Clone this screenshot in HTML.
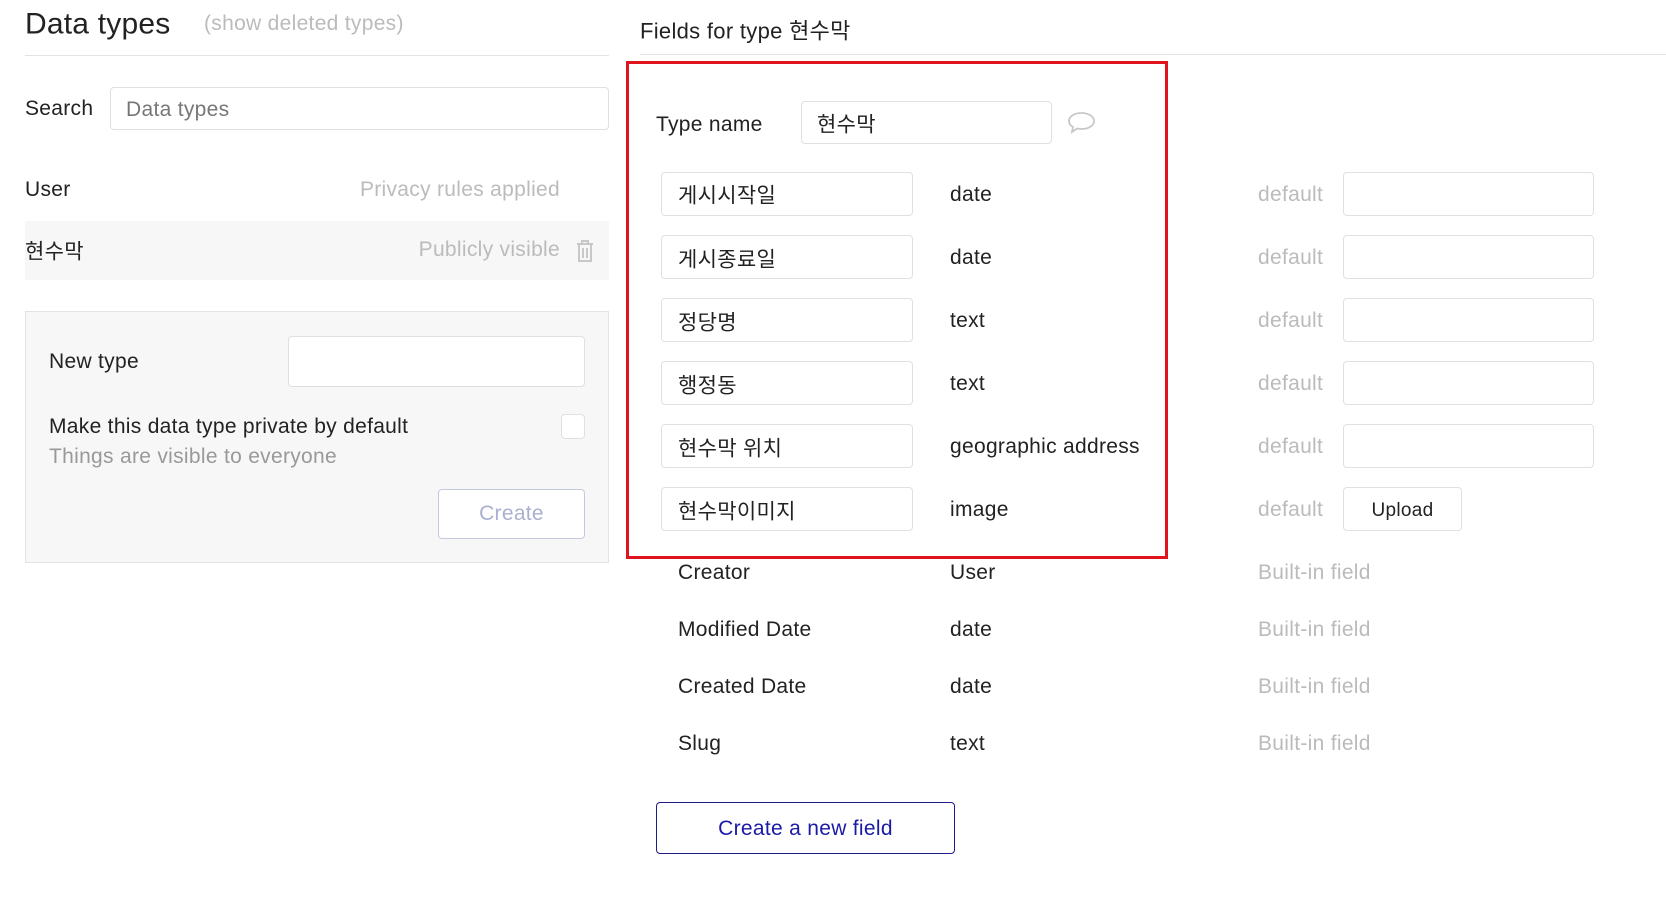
<!DOCTYPE html>
<html><head><meta charset="utf-8"><style>
*{box-sizing:border-box;margin:0;padding:0}
body{width:1666px;height:898px;background:#fff;position:relative;overflow:hidden;font-family:"Liberation Sans","Noto Sans CJK KR",sans-serif;color:#222;font-size:21px;letter-spacing:0.3px}
.a{position:absolute;white-space:nowrap}
.c{transform:translateY(-45%)}
.g{color:#bbb}
.inp{position:absolute;border:1px solid #e0e0e0;border-radius:4px;background:#fff}
</style></head><body>
<div class="a c" style="left:25px;top:23px;font-size:30px;color:#222;letter-spacing:0.2px">Data types</div>
<div class="a c g" style="left:204px;top:23px;font-size:21px">(show deleted types)</div>
<div class="a" style="left:25px;top:55px;width:584px;height:1px;background:#e3e3e3"></div>
<div class="a c" style="left:640px;top:28px;font-size:22px">Fields for type 현수막</div>
<div class="a" style="left:640px;top:54px;width:1026px;height:1px;background:#e3e3e3"></div>

<div class="a c" style="left:25px;top:108px">Search</div>
<div class="inp" style="left:110px;top:87px;width:499px;height:43px"></div>
<div class="a c" style="left:126px;top:109px;color:#777">Data types</div>

<div class="a c" style="left:25px;top:189px">User</div>
<div class="a c g" style="right:1106px;top:189px">Privacy rules applied</div>
<div class="a" style="left:25px;top:221px;width:584px;height:59px;background:#f7f7f7"></div>
<div class="a c" style="left:25px;top:249px">현수막</div>
<div class="a c g" style="right:1106px;top:249px">Publicly visible</div>
<svg class="a" style="left:576px;top:240px" width="18" height="23" viewBox="0 0 18 23" fill="none" stroke="#c8c8c8" stroke-width="2"><path d="M1 4h16M6 4V1h6v3M3 5v16h12V5M7 8v10M11 8v10"/></svg>

<div class="a" style="left:25px;top:311px;width:584px;height:252px;background:#f7f7f7;border:1px solid #e3e3e3"></div>
<div class="a c" style="left:49px;top:361px">New type</div>
<div class="inp" style="left:288px;top:336px;width:297px;height:51px"></div>
<div class="a c" style="left:49px;top:426px">Make this data type private by default</div>
<div class="inp" style="left:561px;top:414px;width:24px;height:25px"></div>
<div class="a c" style="left:49px;top:456px;color:#999">Things are visible to everyone</div>
<div class="a" style="left:438px;top:489px;width:147px;height:50px;border:1px solid #c5c9de;border-radius:4px;background:#fff;color:#aab0d0;text-align:center;line-height:48px">Create</div>

<div class="a" style="left:626px;top:61px;width:542px;height:498px;border:3px solid #e0141e"></div>
<div class="a c" style="left:656px;top:124px">Type name</div>
<div class="inp" style="left:801px;top:101px;width:251px;height:43px"></div>
<div class="a c" style="left:817px;top:122px">현수막</div>
<svg class="a" style="left:1067px;top:111px" width="29" height="24" viewBox="0 0 29 24" fill="none" stroke="#c8c8c8" stroke-width="1.8"><path d="M14.5 2C21 2 27 5 27 10s-6 8-12.5 8c-1.5 0-3-.2-4.3-.5L5 21l1-5C3 14.5 2 12.5 2 10 2 5 8 2 14.5 2z"/></svg>

<div class="inp" style="left:661px;top:172px;width:252px;height:44px"></div><div class="a c" style="left:678px;top:193px">게시시작일</div><div class="a c" style="left:950px;top:194px">date</div><div class="a c g" style="left:1258px;top:194px">default</div><div class="inp" style="left:1343px;top:172px;width:251px;height:44px"></div>
<div class="inp" style="left:661px;top:235px;width:252px;height:44px"></div><div class="a c" style="left:678px;top:257px">게시종료일</div><div class="a c" style="left:950px;top:257px">date</div><div class="a c g" style="left:1258px;top:257px">default</div><div class="inp" style="left:1343px;top:235px;width:251px;height:44px"></div>
<div class="inp" style="left:661px;top:298px;width:252px;height:44px"></div><div class="a c" style="left:678px;top:320px">정당명</div><div class="a c" style="left:950px;top:320px">text</div><div class="a c g" style="left:1258px;top:320px">default</div><div class="inp" style="left:1343px;top:298px;width:251px;height:44px"></div>
<div class="inp" style="left:661px;top:361px;width:252px;height:44px"></div><div class="a c" style="left:678px;top:383px">행정동</div><div class="a c" style="left:950px;top:383px">text</div><div class="a c g" style="left:1258px;top:383px">default</div><div class="inp" style="left:1343px;top:361px;width:251px;height:44px"></div>
<div class="inp" style="left:661px;top:424px;width:252px;height:44px"></div><div class="a c" style="left:678px;top:446px">현수막 위치</div><div class="a c" style="left:950px;top:446px">geographic address</div><div class="a c g" style="left:1258px;top:446px">default</div><div class="inp" style="left:1343px;top:424px;width:251px;height:44px"></div>
<div class="inp" style="left:661px;top:487px;width:252px;height:44px"></div><div class="a c" style="left:678px;top:509px">현수막이미지</div><div class="a c" style="left:950px;top:509px">image</div><div class="a c g" style="left:1258px;top:509px">default</div><div class="inp" style="left:1343px;top:487px;width:119px;height:44px;text-align:center;line-height:46px;font-size:19px">Upload</div>

<div class="a c" style="left:678px;top:572px">Creator</div><div class="a c" style="left:950px;top:572px">User</div><div class="a c g" style="left:1258px;top:572px">Built-in field</div>
<div class="a c" style="left:678px;top:629px">Modified Date</div><div class="a c" style="left:950px;top:629px">date</div><div class="a c g" style="left:1258px;top:629px">Built-in field</div>
<div class="a c" style="left:678px;top:686px">Created Date</div><div class="a c" style="left:950px;top:686px">date</div><div class="a c g" style="left:1258px;top:686px">Built-in field</div>
<div class="a c" style="left:678px;top:743px">Slug</div><div class="a c" style="left:950px;top:743px">text</div><div class="a c g" style="left:1258px;top:743px">Built-in field</div>

<div class="a" style="left:656px;top:802px;width:299px;height:52px;border:1.5px solid #1c1c8a;border-radius:4px;color:#1a1aa6;text-align:center;line-height:51px">Create a new field</div>
</body></html>
